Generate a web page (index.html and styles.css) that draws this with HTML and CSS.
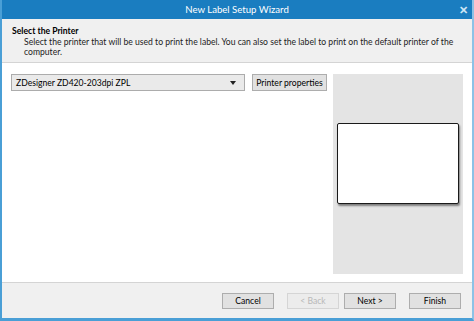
FILE: index.html
```html
<!DOCTYPE html>
<html lang="en">
<head>
  <meta charset="UTF-8" />
  <title>New Label Setup Wizard</title>
  <link rel="stylesheet" href="styles.css">
</head>
<body>
  <div class="window">
    <!-- Title bar -->
    <div class="titlebar">
      <span class="title">New Label Setup Wizard</span>
      <span class="close">✕</span>
    </div>
    <!-- Step header -->
    <div class="step-header">
      <h1>Select the Printer</h1>
      <p>Select the printer that will be used to print the label. You can also set the label to print on the default printer of the computer.</p>
    </div>
    <!-- Main content -->
    <div class="content">
      <div class="printer-row">
        <div class="select">
          <span>ZDesigner ZD420-203dpi ZPL</span>
          <span class="arrow"></span>
        </div>
        <button class="btn props">Printer properties</button>
      </div>
      <div class="preview">
        <div class="label"></div>
      </div>
    </div>
    <!-- Footer buttons -->
    <div class="footer">
      <button class="btn">Cancel</button>
      <button class="btn back" disabled>&lt; Back</button>
      <button class="btn next">Next &gt;</button>
      <button class="btn finish">Finish</button>
    </div>
  </div>
</body>
</html>
```

FILE: styles.css
```css
/* Global */
body {
  margin: 0;
  font-family: Lato, "Open Sans", sans-serif;
  font-size: 8.6px;
  color: #000;
  background: #fff;
}
.window {
  width: 474px;
  height: 321px;
  box-sizing: border-box;
  border-left: 2px solid #4a9fd6;
  border-right: 2px solid #8cc2e6;
  border-bottom: 3px solid #4a9fd6;
  display: flex;
  flex-direction: column;
  overflow: hidden;
}
/* Title bar */
.titlebar {
  height: 19px;
  flex-shrink: 0;
  margin: 0 -2px;
  background: #1a7dc0;
  color: #fff;
  display: flex;
  align-items: center;
  justify-content: center;
  position: relative;
}
.titlebar .title {
  font-size: 9.6px;
  line-height: 19px;
}
.titlebar .close {
  position: absolute;
  right: 6px;
  top: 0;
  font-size: 11px;
  font-weight: bold;
  line-height: 19px;
  color: #cfe6f5;
}
/* Step header */
.step-header {
  height: 37px;
  flex-shrink: 0;
  background: #f0f0f0;
  border-bottom: 1px solid #d4d4d4;
  padding: 6px 0 0 10px;
}
.step-header h1 {
  margin: 0;
  font-size: 8.6px;
  font-weight: bold;
  line-height: 12px;
}
.step-header p {
  margin: 0 0 0 12px;
  width: 430px;
  line-height: 10px;
  font-size: 8.6px;
  color: #222;
}
/* Content */
.content {
  flex: 1;
  display: flex;
  padding: 11px 9px 0 9px;
}
.printer-row {
  display: flex;
  align-items: flex-start;
  gap: 7px;
}
.select {
  width: 220px;
  height: 15px;
  border: 1px solid #acacac;
  background: #eaeaea;
  display: flex;
  align-items: center;
  justify-content: space-between;
  padding: 0 8px 0 4px;
  white-space: nowrap;
}
.select .arrow {
  width: 0;
  height: 0;
  border-left: 3px solid transparent;
  border-right: 3px solid transparent;
  border-top: 4px solid #222;
}
.btn {
  font-family: inherit;
  font-size: 8.6px;
  height: 17px;
  padding: 0;
  border: 1px solid #adadad;
  background: #e1e1e1;
  color: #000;
  box-sizing: border-box;
  white-space: nowrap;
}
.btn.props {
  width: 75px;
}
.preview {
  flex-shrink: 0;
  margin-left: auto;
  width: 130px;
  height: 200px;
  background: #e4e4e4;
  display: flex;
  align-items: center;
  justify-content: center;
}
.label {
  width: 120px;
  height: 79px;
  background: #fff;
  border: 1px solid #1a1a1a;
  border-radius: 2px;
  box-shadow: 1px 2px 2px rgba(0, 0, 0, 0.45);
  margin-top: -21px;
}
/* Footer */
.footer {
  height: 35px;
  flex-shrink: 0;
  background: #f0f0f0;
  border-top: 1px solid #d4d4d4;
  display: flex;
  align-items: center;
  justify-content: flex-end;
  padding-right: 11px;
}
.footer .btn {
  width: 52px;
  height: 16px;
  margin-left: 13px;
}
.footer .next {
  margin-left: 5px;
}
.footer .back {
  color: #b8b8b8;
  border-color: #d5d5d5;
  background: #ececec;
}
```
